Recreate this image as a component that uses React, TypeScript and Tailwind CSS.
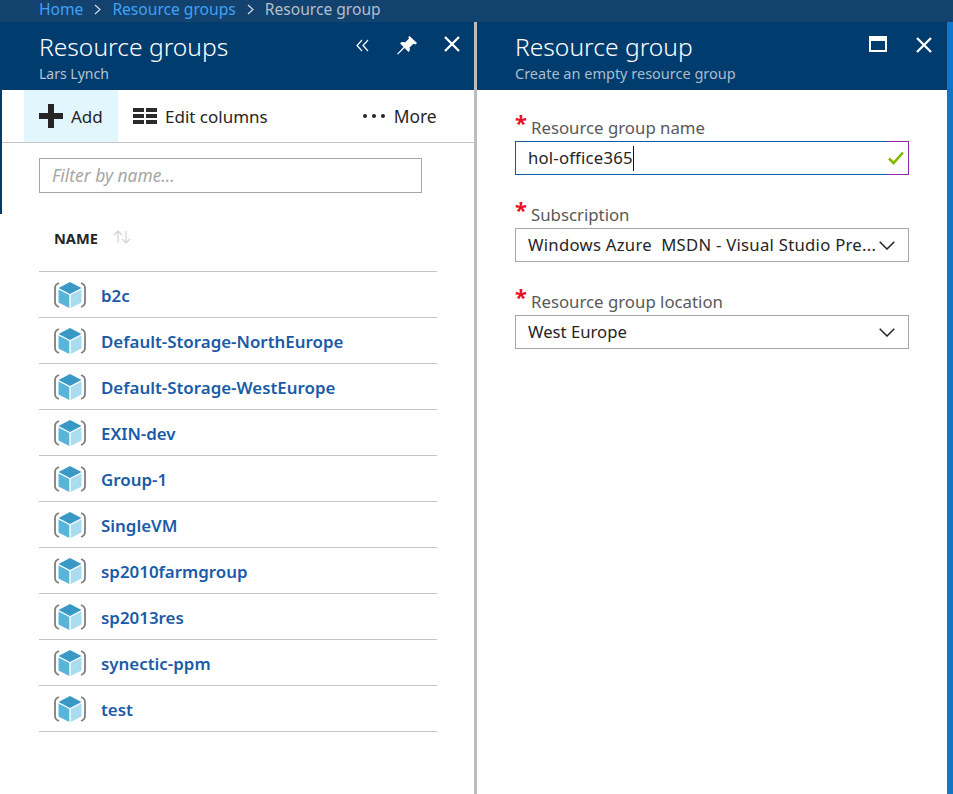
import type { ReactNode } from "react";

const groups = [
  "b2c",
  "Default-Storage-NorthEurope",
  "Default-Storage-WestEurope",
  "EXIN-dev",
  "Group-1",
  "SingleVM",
  "sp2010farmgroup",
  "sp2013res",
  "synectic-ppm",
  "test",
];

function CubeIcon() {
  return (
    <svg width="32" height="28" viewBox="0 0 32 28" className="shrink-0">
      <path d="M5 2Q1 3.5 1 7V21Q1 24.5 5 26" fill="none" stroke="#7f7f7f" strokeWidth="1.8" />
      <path d="M27 2Q31 3.5 31 7V21Q31 24.5 27 26" fill="none" stroke="#7f7f7f" strokeWidth="1.8" />
      <path d="M16 1L27.5 7L16 13L4.5 7Z" fill="#3999c6" />
      <path d="M4.5 8.5L15.3 14V27L4.5 21.5Z" fill="#59b4d9" />
      <path d="M27.5 8.5L16.7 14V27L27.5 21.5Z" fill="#a9dcef" />
    </svg>
  );
}

function ColumnsIcon() {
  return (
    <svg width="24" height="16" viewBox="0 0 24 16" className="shrink-0">
      <path d="M0 0H11V4H0ZM13 0H24V4H13ZM0 6H11V10H0ZM13 6H24V10H13ZM0 12H11V16H0ZM13 12H24V16H13Z" fill="#2b2b2b" />
    </svg>
  );
}

function CloseIcon() {
  return (
    <svg width="16" height="16" viewBox="0 0 16 16" className="shrink-0">
      <path d="M1 1L15 15M15 1L1 15" stroke="white" strokeWidth="2.3" />
    </svg>
  );
}

function Crumb() {
  return (
    <svg width="7" height="11" viewBox="0 0 7 11" className="shrink-0">
      <path d="M1 1L6 5.5L1 10" fill="none" stroke="#d5dde5" strokeWidth="1.2" />
    </svg>
  );
}

function Chevron() {
  return (
    <svg width="16" height="9" viewBox="0 0 16 9" className="shrink-0">
      <path d="M0.7 0.7L8 8L15.3 0.7" fill="none" stroke="#252525" strokeWidth="1.5" />
    </svg>
  );
}

function Label({ text }: { text: string }) {
  return (
    <div className="flex h-[26px] items-end">
      <span className="-mt-[3px] w-[16px] self-start text-[22px] font-bold leading-[20px] text-[#e81123]">*</span>
      <span className="text-[16.8px] leading-[26px] text-[#595959]">{text}</span>
    </div>
  );
}

function SelectBox({ children }: { children: ReactNode }) {
  return (
    <div className="flex h-[34px] w-[394px] items-center border border-[#a6a6a6] pr-[13px] pl-[12px]">
      <span className="flex-1 overflow-hidden whitespace-pre text-[16.7px] text-[#252525]">{children}</span>
      <Chevron />
    </div>
  );
}

export default function App() {
  return (
    <div className="flex h-[794px] w-[953px] flex-col overflow-hidden bg-white font-['Noto_Sans','Open_Sans',sans-serif]">
      <div className="flex h-[22px] shrink-0 items-center gap-[11px] bg-[#13426f] pb-[3px] pl-[39px] text-[15.6px] leading-none">
        <span className="text-[#3fa2f5]">Home</span>
        <Crumb />
        <span className="text-[#3fa2f5]">Resource groups</span>
        <Crumb />
        <span className="text-[#b4bfca]">Resource group</span>
      </div>

      <div className="flex flex-1">
        <div className="h-[192px] w-[2px] bg-[#003c6e]" />

        <div className="flex w-[472px] flex-col">
          <div className="flex h-[68px] bg-[#003c6e] pl-[37px]">
            <div className="flex-1">
              <div className="pt-[7px] text-[24.6px] font-light leading-[35px] text-white">Resource groups</div>
              <div className="text-[14px] leading-[20px] text-[#b7c4d1]">Lars Lynch</div>
            </div>
            <div className="flex items-start pt-[14px] pr-[14px]">
              <svg width="13" height="13" viewBox="0 0 13 13" className="mt-[3px] shrink-0">
                <path d="M6 1L1 6.5L6 12M12 1L7 6.5L12 12" fill="none" stroke="white" strokeWidth="1.2" />
              </svg>
              <svg width="20" height="19" viewBox="0 0 20 19" className="ml-[28px] shrink-0">
                <path d="M12.5 0L20 7L18.5 8.5L16.5 7.7L12.5 11.5C13.3 13.5 12.7 15 11.5 16L7.6 12L1 18.5L0 18L6.5 11L3 7.3C4.2 6.2 6 5.6 8 6.5L12 2.6L11.3 1Z" fill="white" />
              </svg>
              <div className="ml-[27px]">
                <CloseIcon />
              </div>
            </div>
          </div>

          <div className="flex h-[53px] items-stretch border-b border-[#c4c4c4] pl-[22px] text-[17px] text-[#252525]">
            <div className="flex w-[94px] items-center gap-[8px] bg-[#e2f6fd] pl-[15px]">
              <svg width="24" height="24" viewBox="0 0 24 24" className="shrink-0">
                <path d="M9 0H15V9H24V15H15V24H9V15H0V9H9Z" fill="#252525" />
              </svg>
              <span className="pt-[1px]">Add</span>
            </div>
            <div className="flex items-center gap-[8px] pl-[15px]">
              <ColumnsIcon />
              <span className="pt-[1px]">Edit columns</span>
            </div>
            <div className="ml-[95px] flex items-center gap-[9px]">
              <span className="flex gap-[5px]">
                <span className="h-[4px] w-[4px] rounded-full bg-[#252525]" />
                <span className="h-[4px] w-[4px] rounded-full bg-[#252525]" />
                <span className="h-[4px] w-[4px] rounded-full bg-[#252525]" />
              </span>
              <span className="pt-[1px] text-[17.4px]">More</span>
            </div>
          </div>

          <div className="pt-[15px] pl-[37px] pr-[37px]">
            <div className="flex h-[35px] w-[383px] items-center border border-[#a6a6a6] pb-[1px] pl-[12px] text-[17.4px] italic text-[#a6a6a6]">
              Filter by name...
            </div>
            <div className="flex h-[78px] items-end gap-[14px] pb-[23px] pl-[15px]">
              <span className="text-[14.6px] font-bold leading-[20px] text-[#252525]">NAME</span>
              <svg width="20" height="16" viewBox="0 0 20 16" fill="none" stroke="#d2d2d2" strokeWidth="1.2" className="mb-[3px]">
                <path d="M6 14V2M2 6L6 2L10 6M14 2V14M10 10L14 14L18 10" />
              </svg>
            </div>
            <div className="w-[398px] border-t border-[#c4c4c4]">
              {groups.map((g) => (
                <div key={g} className="flex h-[46px] items-center gap-[15px] border-b border-[#c4c4c4] pl-[15px]">
                  <CubeIcon />
                  <span className="pt-[2px] text-[16.9px] font-semibold text-[#1a5ba8]">{g}</span>
                </div>
              ))}
            </div>
          </div>
        </div>

        <div className="w-[3px] bg-[#bdbdbd]" />

        <div className="flex w-[470px] flex-col">
          <div className="flex h-[68px] bg-[#003c6e] pl-[38px]">
            <div className="flex-1">
              <div className="pt-[7px] text-[24.6px] font-light leading-[35px] text-white">Resource group</div>
              <div className="text-[14.5px] leading-[18px] text-[#a9bccd]">Create an empty resource group</div>
            </div>
            <div className="flex items-start pt-[14px] pr-[15px]">
              <div className="h-[16px] w-[18px] border-2 border-t-[5px] border-white" />
              <div className="ml-[29px] mt-[1px]">
                <CloseIcon />
              </div>
            </div>
          </div>

          <div className="pt-[25px] pl-[38px]">
            <Label text="Resource group name" />
            <div className="flex h-[34px] w-[394px]">
              <div className="flex flex-1 items-center border border-r-0 border-[#0f5aa6] pl-[12px] text-[16.7px] tracking-[0.2px] text-[#252525]">
                hol-office365
                <span className="h-[25px] w-px bg-[#111111]" />
              </div>
              <div className="flex w-[21px] items-center border border-l-0 border-[#8a2da5]">
                <svg width="16" height="14" viewBox="0 0 16 14" className="shrink-0">
                  <path d="M1 7.5L5.5 12L15 1.5" fill="none" stroke="#7fba00" strokeWidth="2.6" />
                </svg>
              </div>
            </div>
            <div className="pt-[27px]">
              <Label text="Subscription" />
              <SelectBox>
                <span className="tracking-[0.27px]">Windows Azure  MSDN - Visual Studio Pre...</span>
              </SelectBox>
            </div>
            <div className="pt-[27px]">
              <Label text="Resource group location" />
              <SelectBox>West Europe</SelectBox>
            </div>
          </div>
        </div>

        <div className="w-[6px] bg-[#0f76cc]" />
      </div>
    </div>
  );
}
